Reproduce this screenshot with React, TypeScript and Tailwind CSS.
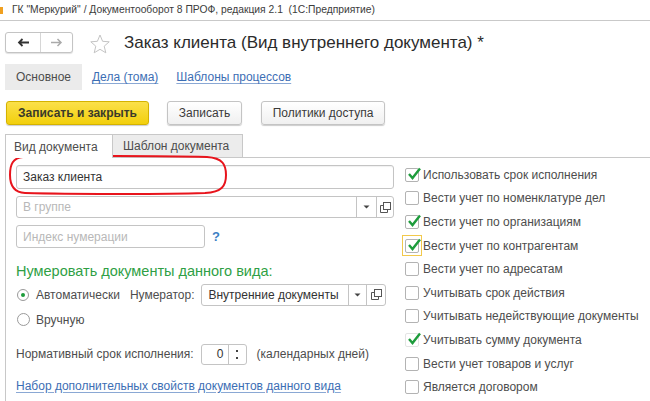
import React from "react";

const Drop = () => (
  <svg width="7" height="4" viewBox="0 0 7 4"><path d="M0.5 0.5h6L3.5 3.5z" fill="#444" /></svg>
);
const Copy = () => (
  <svg width="11" height="11" viewBox="0 0 11 11" fill="none" stroke="#555" strokeWidth="1">
    <rect x="3.5" y="0.5" width="7" height="7" fill="white" />
    <path d="M3.5 3.5h-3v7h7v-3" />
  </svg>
);
const Check = () => (
  <svg width="15" height="13" viewBox="0 0 15 13" className="absolute left-[1px] top-[-2px]">
    <path d="M2 7l3.5 4L13 1.5" fill="none" stroke="#1e9c3c" strokeWidth="2.4" />
  </svg>
);

function CB({ label, checked, focus, nobox }: { label: string; checked?: boolean; focus?: boolean; nobox?: boolean }) {
  return (
    <div className="flex items-center h-[23.6px] whitespace-nowrap">
      <div className={"w-[20px] h-[21px] flex items-center justify-center mr-[1px] " + (focus ? "border border-[#f2c94c]" : "border border-transparent")}>
        <div className={"relative w-[14px] h-[14px] rounded-[2px] bg-white " + (nobox ? "border border-[#e4e4e4]" : "border border-[#b3b3b3]")}>
          {checked && <Check />}
        </div>
      </div>
      <span className="text-[12px] text-[#4d4d4d]">{label}</span>
    </div>
  );
}

export default function App() {
  return (
    <div className="w-[650px] h-[401px] bg-white overflow-hidden relative font-['Liberation_Sans',Arial,sans-serif] text-[#4d4d4d] whitespace-nowrap">
      {/* title bar */}
      <div className="h-[21px] border-b border-[#c9c9c9] flex items-center relative">
        <div className="absolute left-0 top-[7px] w-[3px] h-[7px] bg-[#f0a020]" />
        <span className="pl-[12px] text-[10.3px] text-[#3c3c3c]">
          ГК "Меркурий" / Документооборот 8 ПРОФ, редакция 2.1&nbsp;&nbsp;(1С:Предприятие)
        </span>
      </div>

      {/* header */}
      <div className="flex items-center mt-[11px] pl-[5px] h-[21px]">
        <div className="flex w-[68px] h-[21px] border border-[#c4c4c4] rounded-[3px] bg-white shadow-[0_1px_1px_rgba(0,0,0,0.12)]">
          <div className="w-[35px] flex items-center justify-center border-r border-[#d6d6d6]">
            <svg width="13" height="9" viewBox="0 0 13 9"><path d="M12 4.5H2M5.5 1L2 4.5 5.5 8" fill="none" stroke="#333" strokeWidth="1.8" /></svg>
          </div>
          <div className="flex-1 flex items-center justify-center">
            <svg width="13" height="9" viewBox="0 0 13 9"><path d="M1 4.5h10M7.5 1L11 4.5 7.5 8" fill="none" stroke="#aaa" strokeWidth="1.5" /></svg>
          </div>
        </div>
        <svg width="22" height="20" viewBox="0 0 22 20" className="ml-[16px] mt-[2px]">
          <path d="M11 1l2.6 6.3 6.6.5-5 4.4 1.6 6.6L11 15.3 5.2 18.8l1.6-6.6-5-4.4 6.6-.5z" fill="none" stroke="#c4c4c4" strokeWidth="1" />
        </svg>
        <span className="ml-[13px] text-[17px] text-[#2b2b2b] leading-none">Заказ клиента (Вид внутреннего документа) *</span>
      </div>

      {/* form tabs */}
      <div className="flex items-center mt-[11px] pl-[5px] h-[26px] text-[12px]">
        <div className="h-full px-[11px] bg-[#ebebeb] flex items-center text-[#4d4d4d]">Основное</div>
        <span className="ml-[10px] text-[#3c6eb4] underline underline-offset-2 decoration-[#8aa8d4]">Дела (тома)</span>
        <span className="ml-[18px] text-[#3c6eb4] underline underline-offset-2 decoration-[#8aa8d4]">Шаблоны процессов</span>
      </div>

      {/* buttons */}
      <div className="flex items-center mt-[11px] pl-[6px] h-[24px] text-[12px]">
        <div className="h-full w-[143px] flex items-center justify-center rounded-[3px] border border-[#d4b200] bg-[linear-gradient(#fbe04a,#f2cf0c)] font-bold text-[#3a3a2a] shadow-[0_1px_1px_rgba(0,0,0,0.2)]">Записать и закрыть</div>
        <div className="h-full w-[75px] ml-[18px] flex items-center justify-center rounded-[3px] border border-[#c4c4c4] bg-[linear-gradient(#ffffff,#f0f0f0)] text-[#3a3a3a] shadow-[0_1px_1px_rgba(0,0,0,0.2)]">Записать</div>
        <div className="h-full w-[124px] ml-[19px] flex items-center justify-center rounded-[3px] border border-[#c4c4c4] bg-[linear-gradient(#ffffff,#f0f0f0)] text-[#3a3a3a] shadow-[0_1px_1px_rgba(0,0,0,0.2)]">Политики доступа</div>
      </div>

      {/* page tabs */}
      <div className="flex mt-[9px] pl-[5px] h-[23px] text-[12px]">
        <div className="w-[108px] h-[24px] border-l border-t border-r border-[#c8c8c8] bg-white flex items-center pl-[8px] text-[#4d4d4d] relative z-10">Вид документа</div>
        <div className="w-[130px] h-full border-t border-r border-[#c8c8c8] bg-[#ececec] flex items-center pl-[10px] text-[#4d4d4d]">Шаблон документа</div>
      </div>

      {/* panel */}
      <div className="ml-[5px] border-l border-t border-[#c8c8c8] flex h-[300px] relative">
        {/* left column */}
        <div className="w-[388px] pl-[10px] pt-[7px] flex flex-col text-[12px] relative">
          <div className="h-[24px] border border-[#c4c4c4] rounded-[3px] flex items-center pl-[6px] text-[#333] shadow-[inset_0_1px_1px_rgba(0,0,0,0.06)]">Заказ клиента</div>

          <div className="mt-[7px] h-[22px] flex border border-[#c4c4c4] rounded-[3px]">
            <div className="flex-1 flex items-center pl-[6px] text-[#b8b8b8]">В группе</div>
            <div className="w-[20px] border-l border-[#c4c4c4] flex items-center justify-center"><Drop /></div>
            <div className="w-[17px] border-l border-[#c4c4c4] flex items-center justify-center"><Copy /></div>
          </div>

          <div className="mt-[7px] flex items-center h-[23px]">
            <div className="w-[189px] h-full border border-[#c4c4c4] rounded-[3px] flex items-center pl-[6px] text-[#b8b8b8]">Индекс нумерации</div>
            <span className="ml-[7px] text-[#3c7fc4] font-bold text-[13px]">?</span>
          </div>

          <div className="mt-[16px] text-[14.5px] text-[#2f9f45] leading-none">Нумеровать документы данного вида:</div>

          <div className="mt-[5px] h-[22px] flex items-center">
            <div className="w-[12px] h-[12px] rounded-full border border-[#9a9a9a] flex items-center justify-center ml-[1px]">
              <div className="w-[4px] h-[4px] rounded-full bg-[#1e9c3c]" />
            </div>
            <span className="ml-[7px]">Автоматически</span>
            <span className="ml-[10px]">Нумератор:</span>
            <div className="ml-[7px] w-[185px] h-full flex border border-[#c4c4c4] rounded-[3px]">
              <div className="flex-1 flex items-center pl-[6px] text-[#333]">Внутренние документы</div>
              <div className="w-[18px] border-l border-[#c4c4c4] flex items-center justify-center"><Drop /></div>
              <div className="w-[19px] border-l border-[#c4c4c4] flex items-center justify-center"><Copy /></div>
            </div>
          </div>

          <div className="mt-[3px] h-[22px] flex items-center">
            <div className="w-[13px] h-[13px] rounded-full border border-[#9a9a9a] ml-[1px]" />
            <span className="ml-[6px]">Вручную</span>
          </div>

          <div className="mt-[13px] h-[21px] flex items-center">
            <span>Нормативный срок исполнения:</span>
            <div className="ml-[7px] w-[46px] h-full flex border border-[#c4c4c4] rounded-[3px]">
              <div className="flex-1 flex items-center justify-end pr-[4px] text-[#333]">0</div>
              <div className="w-[18px] border-l border-[#c4c4c4] flex flex-col items-center justify-center gap-[5px]">
                <div className="w-[2px] h-[2px] bg-[#444]" />
                <div className="w-[2px] h-[2px] bg-[#444]" />
              </div>
            </div>
            <span className="ml-[10px]">(календарных дней)</span>
          </div>

          <div className="mt-[12px] text-[#3c6eb4] underline underline-offset-2 decoration-[#8aa8d4]">Набор дополнительных свойств документов данного вида</div>

          {/* red ellipse marker */}
          <svg className="absolute left-[1px] top-[-4px]" width="222" height="42" viewBox="0 0 222 42">
            <path d="M16 3 C60 1.5 160 2 200 3 C216 4 219 11 219 21 C219 32 215 38 198 39 C150 40.5 60 40 18 39 C7 38.5 3 32 3 21 C3 10 6 4 16 3 Z" fill="none" stroke="#e8141c" strokeWidth="2" />
          </svg>
        </div>

        {/* right column */}
        <div className="ml-[8px] pt-[5px] flex flex-col">
          <CB label="Использовать срок исполнения" checked />
          <CB label="Вести учет по номенклатуре дел" />
          <CB label="Вести учет по организациям" checked />
          <CB label="Вести учет по контрагентам" checked focus />
          <CB label="Вести учет по адресатам" />
          <CB label="Учитывать срок действия" />
          <CB label="Учитывать недействующие документы" />
          <CB label="Учитывать сумму документа" checked nobox />
          <CB label="Вести учет товаров и услуг" />
          <CB label="Является договором" />
        </div>
      </div>
    </div>
  );
}
